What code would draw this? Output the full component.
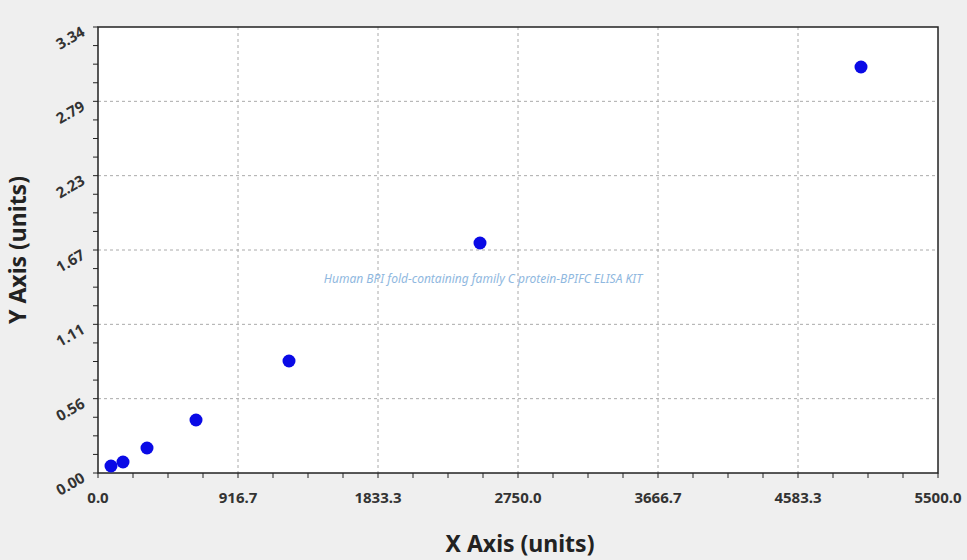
const L = 98, T = 27, R = 938, B = 473;

const xLabels = ["0.0", "916.7", "1833.3", "2750.0", "3666.7", "4583.3", "5500.0"];
const yLabels = ["0.00", "0.56", "1.11", "1.67", "2.23", "2.79", "3.34"];
const points = [
  [111, 466], [123, 462], [147, 448], [196, 420], [289, 361], [480, 243], [861, 67],
];

export default function App() {
  const w = (R - L) / 6;
  const h = (B - T) / 6;
  return (
    <div className="w-[967px] h-[560px] bg-[#efefef] overflow-hidden font-['Liberation_Sans',Arial,sans-serif]">
      <svg width="967" height="560">
        <rect x={L} y={T} width={R - L} height={B - T} fill="#fff" />
        {[1, 2, 3, 4, 5].map((i) => (
          <g key={i} stroke="#aaa" strokeDasharray="3 3">
            <line x1={L + i * w} y1={T} x2={L + i * w} y2={B} />
            <line x1={L} y1={B - i * h} x2={R} y2={B - i * h} />
          </g>
        ))}
        {Array.from({ length: 25 }).map((_, i) => (
          <g key={i} stroke="#222">
            <line x1={L + (i * w) / 4} y1={B} x2={L + (i * w) / 4} y2={B + 5} />
            <line x1={L - 5} y1={B - (i * h) / 4} x2={L} y2={B - (i * h) / 4} />
          </g>
        ))}
        <rect x={L} y={T} width={R - L} height={B - T} fill="none" stroke="#222" strokeWidth="1.5" />
        <text x="483" y="283" textAnchor="middle" fontSize="12" fontStyle="italic" fill="#8fb8e0">
          Human BPI fold-containing family C protein-BPIFC ELISA KIT
        </text>
        {points.map(([x, y], i) => (
          <circle key={i} cx={x} cy={y} r="6.5" fill="#0a0ae6" />
        ))}
        {xLabels.map((t, i) => (
          <text key={t} x={L + i * w} y="503" textAnchor="middle" fontSize="15" fontWeight="bold" fill="#333">
            {t}
          </text>
        ))}
        {yLabels.map((t, i) => (
          <text
            key={t}
            x="86"
            y={B - i * h + 8}
            textAnchor="end"
            fontSize="15"
            fontWeight="bold"
            fill="#333"
            transform={`rotate(-30 86 ${B - i * h + 8})`}
          >
            {t}
          </text>
        ))}
        <text x="520" y="552" textAnchor="middle" fontSize="23" fontWeight="bold" fill="#222">
          X Axis (units)
        </text>
        <text x="26" y="250" textAnchor="middle" fontSize="23" fontWeight="bold" fill="#222" transform="rotate(-90 26 250)">
          Y Axis (units)
        </text>
      </svg>
    </div>
  );
}
